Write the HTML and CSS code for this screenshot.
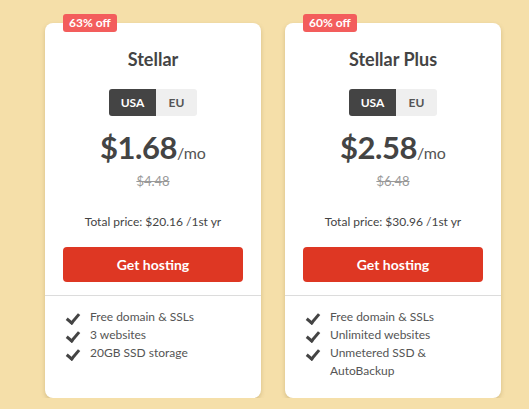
FILE: index.html
```html
<!DOCTYPE html>
<html lang="en">
<head>
    <meta charset="UTF-8">
    <meta name="viewport" content="width=device-width, initial-scale=1.0">
    <title>Hosting plans</title>
    <link rel="stylesheet" href="styles.css">
</head>
<body>
    <div class="plans">
        <!-- Stellar -->
        <div class="card">
            <span class="badge">63% off</span>
            <div class="top">
                <h2>Stellar</h2>
                <div class="toggle">
                    <span class="opt active">USA</span>
                    <span class="opt">EU</span>
                </div>
                <div class="price">$1.68<small>/mo</small></div>
                <div class="old">$4.48</div>
                <p class="total">Total price: $20.16 /1st yr</p>
                <button>Get hosting</button>
            </div>
            <ul class="features">
                <li>Free domain &amp; SSLs</li>
                <li>3 websites</li>
                <li>20GB SSD storage</li>
            </ul>
        </div>

        <!-- Stellar Plus -->
        <div class="card">
            <span class="badge">60% off</span>
            <div class="top">
                <h2>Stellar Plus</h2>
                <div class="toggle">
                    <span class="opt active">USA</span>
                    <span class="opt">EU</span>
                </div>
                <div class="price">$2.58<small>/mo</small></div>
                <div class="old">$6.48</div>
                <p class="total">Total price: $30.96 /1st yr</p>
                <button>Get hosting</button>
            </div>
            <ul class="features">
                <li>Free domain &amp; SSLs</li>
                <li>Unlimited websites</li>
                <li>Unmetered SSD &amp; AutoBackup</li>
            </ul>
        </div>
    </div>
</body>
</html>
```

FILE: styles.css
```css
* {
    margin: 0;
    padding: 0;
    box-sizing: border-box;
    font-family: "Lato", "Open Sans", sans-serif;
}

body {
    background-color: #f5dfa9;
    color: #444;
}

.plans {
    display: flex;
    gap: 24px;
    padding: 23px 0 0 45px;
}

.card {
    position: relative;
    width: 216px;
    height: 375px;
    background: #ffffff;
    border-radius: 8px;
    box-shadow: 0 2px 4px rgba(120, 90, 30, 0.25);
}

.badge {
    position: absolute;
    top: -9px;
    left: 18px;
    height: 18px;
    padding: 0 6px;
    background: #f35d5c;
    color: #fff;
    font-size: 12px;
    font-weight: bold;
    line-height: 18px;
    border-radius: 3px;
}

.top {
    display: flex;
    flex-direction: column;
    align-items: center;
    padding: 24px 18px 13px;
    border-bottom: 1px solid #dcdcdc;
}

h2 {
    font-size: 18px;
    font-weight: bold;
    color: #444;
    line-height: 24px;
}

.toggle {
    display: flex;
    margin-top: 18px;
    border-radius: 3px;
    overflow: hidden;
}

.opt {
    height: 27px;
    line-height: 27px;
    font-size: 12px;
    font-weight: bold;
    text-align: center;
    background: #efefef;
    color: #555;
    width: 41px;
}

.opt.active {
    width: 47px;
    background: #444;
    color: #fff;
}

.price {
    margin-top: 12px;
    font-size: 31px;
    font-weight: bold;
    line-height: 38px;
    letter-spacing: -0.5px;
    color: #444;
}

.price small {
    font-size: 16px;
    font-weight: normal;
    letter-spacing: 0;
    color: #555;
}

.old {
    margin-top: 1px;
    font-size: 13px;
    color: #999;
    text-decoration: line-through;
    line-height: 16px;
}

.total {
    margin-top: 25px;
    font-size: 12px;
    line-height: 16px;
}

button {
    width: 180px;
    height: 35px;
    margin-top: 17px;
    background: #de3723;
    color: #fff;
    border: none;
    border-radius: 4px;
    font-size: 14px;
    font-weight: bold;
}

.features {
    list-style: none;
    padding: 12px 20px 0 45px;
}

.features li {
    position: relative;
    font-size: 12px;
    line-height: 18px;
    color: #555;
}

.features li::before {
    content: "";
    position: absolute;
    left: -21px;
    top: 3px;
    width: 5px;
    height: 10px;
    border: solid #444;
    border-width: 0 3px 3px 0;
    transform: rotate(40deg);
}
```
